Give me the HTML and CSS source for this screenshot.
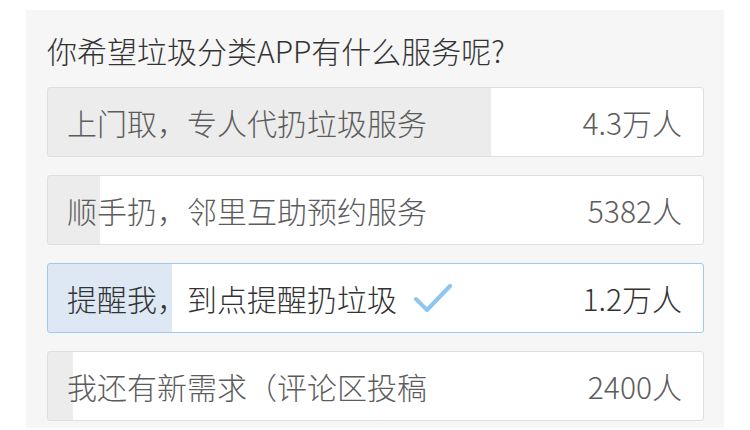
FILE: index.html
```html
<!DOCTYPE html>
<html lang="zh-CN">
<head>
    <meta charset="UTF-8">
    <title>垃圾分类投票</title>
    <meta name="viewport" content="width=device-width, initial-scale=1.0">
    <link rel="stylesheet" href="styles.css">
</head>
<body>
    <div class="poll">
        <h1 class="poll-title">你希望垃圾分类APP有什么服务呢?</h1>
        <ul class="options">
            <li class="option" style="--p: 67.7%">
                <span class="label">上门取，专人代扔垃圾服务</span>
                <span class="count">4.3万人</span>
            </li>
            <li class="option" style="--p: 7.9%">
                <span class="label">顺手扔，邻里互助预约服务</span>
                <span class="count">5382人</span>
            </li>
            <li class="option selected" style="--p: 18.9%">
                <span class="label">提醒我，到点提醒扔垃圾</span>
                <svg class="check" width="38" height="30" viewBox="0 0 38 30">
                    <path d="M2 15 L13 26 L36 2" fill="none" stroke="#8ec5f1" stroke-width="4" stroke-linecap="round" stroke-linejoin="round"/>
                </svg>
                <span class="count">1.2万人</span>
            </li>
            <li class="option" style="--p: 3.8%">
                <span class="label">我还有新需求（评论区投稿</span>
                <span class="count">2400人</span>
            </li>
        </ul>
    </div>
</body>
</html>
```

FILE: styles.css
```css
body {
    margin: 0;
    background-color: #ffffff;
    font-family: "Noto Sans CJK SC", "Noto Sans", sans-serif;
    font-weight: 300;
}
.poll {
    width: 698px;
    height: 418px;
    margin: 10px 0 0 26px;
    padding: 20px 20px 0 21px;
    box-sizing: border-box;
    background-color: #f6f6f6;
}
.poll-title {
    margin: 0 0 17px;
    font-size: 30px;
    font-weight: 300;
    line-height: 40px;
    color: #333333;
}
.options {
    list-style: none;
    margin: 0;
    padding: 0;
}
.option {
    display: flex;
    align-items: center;
    height: 70px;
    box-sizing: border-box;
    margin-bottom: 18px;
    padding: 0 21px 0 19px;
    border: 1px solid #dedede;
    border-radius: 3px;
    background: linear-gradient(to right, #ececec var(--p), #ffffff var(--p));
    font-size: 30px;
    color: #5c5c5c;
}
.option.selected {
    border-color: #9ccbef;
    background: linear-gradient(to right, #dde8f4 var(--p), #ffffff var(--p));
    color: #333333;
}
.label {
    white-space: nowrap;
}
.check {
    margin-left: 17px;
    margin-top: 2px;
}
.count {
    margin-left: auto;
    color: #5c5c5c;
}
.selected .count {
    color: #333333;
}
```
